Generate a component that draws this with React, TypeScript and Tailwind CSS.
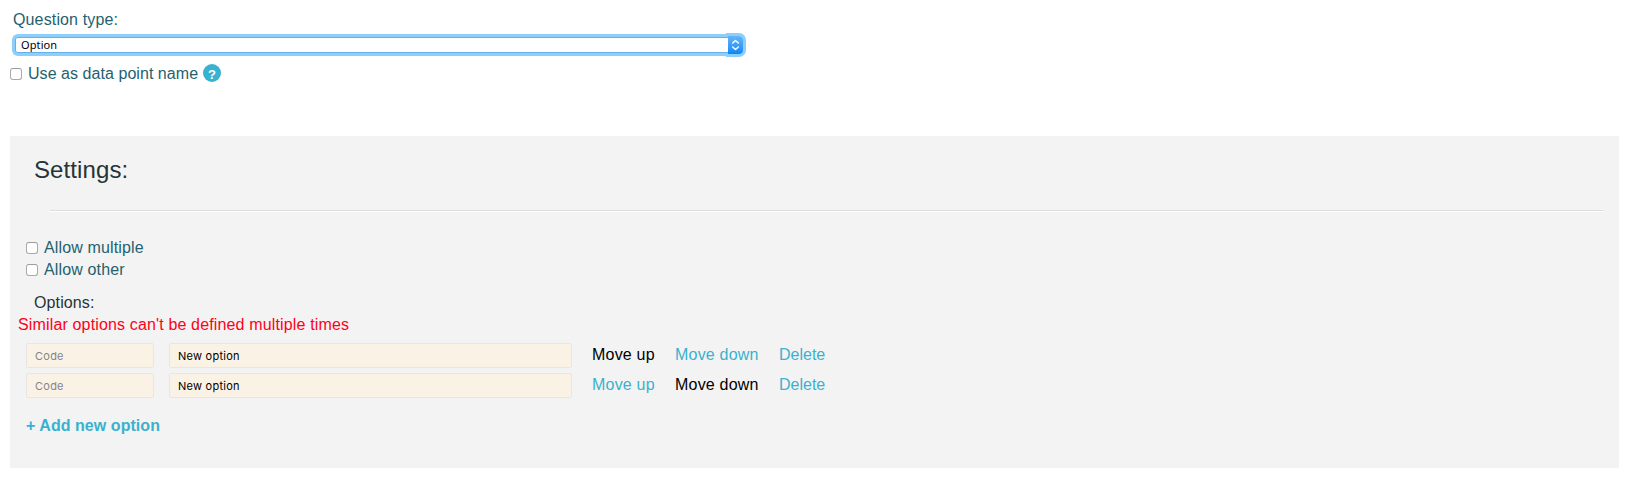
type CheckProps = { label: string; spacing?: string };

function Check({ label, spacing = "tracking-[0.14px]" }: CheckProps) {
  return (
    <label className="flex h-[22px] items-center text-[#25616f]">
      <input
        type="checkbox"
        className="mr-[6px] h-3 w-3 appearance-none rounded-[3px] border border-[#a9a9a9] border-t-[#9c9c9c] bg-white"
      />
      <span className={`whitespace-nowrap ${spacing}`}>{label}</span>
    </label>
  );
}

type RowProps = { first?: boolean; last?: boolean };

const field =
  "h-[25px] rounded-[2px] border border-[#e6e6e6] bg-[#fbf2e6] pl-2 pt-px font-['Inter',sans-serif] text-[11px] tracking-[0.25px] text-black placeholder:text-[#858585] outline-none";

function OptionRow({ first, last }: RowProps) {
  return (
    <div className="flex h-[25px]">
      <input className={`${field} w-[128px]`} placeholder="Code" />
      <input className={`${field} ml-[15px] w-[403px]`} defaultValue="New option" />
      <div className="ml-5 flex h-6 items-center whitespace-nowrap tracking-[0.2px] text-[#39b1cf]">
        <span className={`w-[83px] ${first ? "text-black" : ""}`}>Move up</span>
        <span className={`w-[104px] ${last ? "text-black" : ""}`}>Move down</span>
        <span className="tracking-normal">Delete</span>
      </div>
    </div>
  );
}

export default function App() {
  return (
    <div className="h-[481px] w-[1630px] bg-white pl-[10px] pt-[9px] font-['Liberation_Sans',Arial,sans-serif] text-base leading-[22px]">
      <div className="pl-[3px] tracking-[0.14px] text-[#25616f]">Question type:</div>
      <div className="ml-[2px] mt-[2px] flex h-6 w-[734px] items-center">
        <div className="flex h-[22px] min-w-0 flex-1 items-center rounded-l-[6px] border-[3px] border-r-0 border-[#8ccffa] bg-white shadow-[inset_0_1px_0_#65b0ec,inset_0_-1px_0_#65b0ec,inset_1px_0_0_#65b0ec]">
          <span className="pl-[6px] font-['Noto_Sans',sans-serif] text-[11px] leading-4 tracking-[0.1px] text-black">Option</span>
        </div>
        <div className="-ml-[2px] h-6 w-[20px] rounded-r-[7px] border-y-[3px] border-r-[3px] border-[#8ccffa] pl-[2px]">
          <div className="flex h-full w-[15px] items-center justify-center rounded-r-[4px] bg-linear-to-b from-[#62b4fa] to-[#0087fb]">
            <svg width="9" height="12" viewBox="0 0 9 12" fill="none" stroke="white" strokeWidth="1.5" strokeLinecap="round" strokeLinejoin="round">
              <path d="M1.7 4 4.5 1.5 7.3 4M1.7 8 4.5 10.5 7.3 8" />
            </svg>
          </div>
        </div>
      </div>
      <div className="mt-[6px] flex h-[22px] items-center">
        <Check label="Use as data point name" spacing="tracking-[0.05px]" />
        <span className="mb-[2px] ml-[5px] flex h-[18px] w-[18px] items-center justify-center rounded-full bg-[#39b1cf] pt-[2px] text-[13px] font-bold leading-none text-white">?</span>
      </div>

      <section className="mt-[51px] h-[332px] w-[1609px] bg-[#f3f3f3]">
        <h2 className="pl-6 pt-5 text-2xl leading-[28px] tracking-[0.1px] text-[#263436]">Settings:</h2>
        <div className="ml-10 mt-[26px] h-[2px] w-[1553px] border-b border-t border-b-white border-t-[#dddddd]" />
        <div className="pl-4 pt-[25px]">
          <Check label="Allow multiple" />
          <Check label="Allow other" />
        </div>
        <div className="mt-[11px] pl-6 tracking-[0.12px] text-[#263436]">Options:</div>
        <div className="pl-2 tracking-[0.15px] text-[#ff0019]">Similar options can't be defined multiple times</div>
        <div className="mt-[7px] flex flex-col gap-[5px] pl-4">
          <OptionRow first />
          <OptionRow last />
        </div>
        <div className="mt-[17px] pl-4 font-bold tracking-[0.05px] text-[#39b1cf]">+ Add new option</div>
      </section>
    </div>
  );
}
